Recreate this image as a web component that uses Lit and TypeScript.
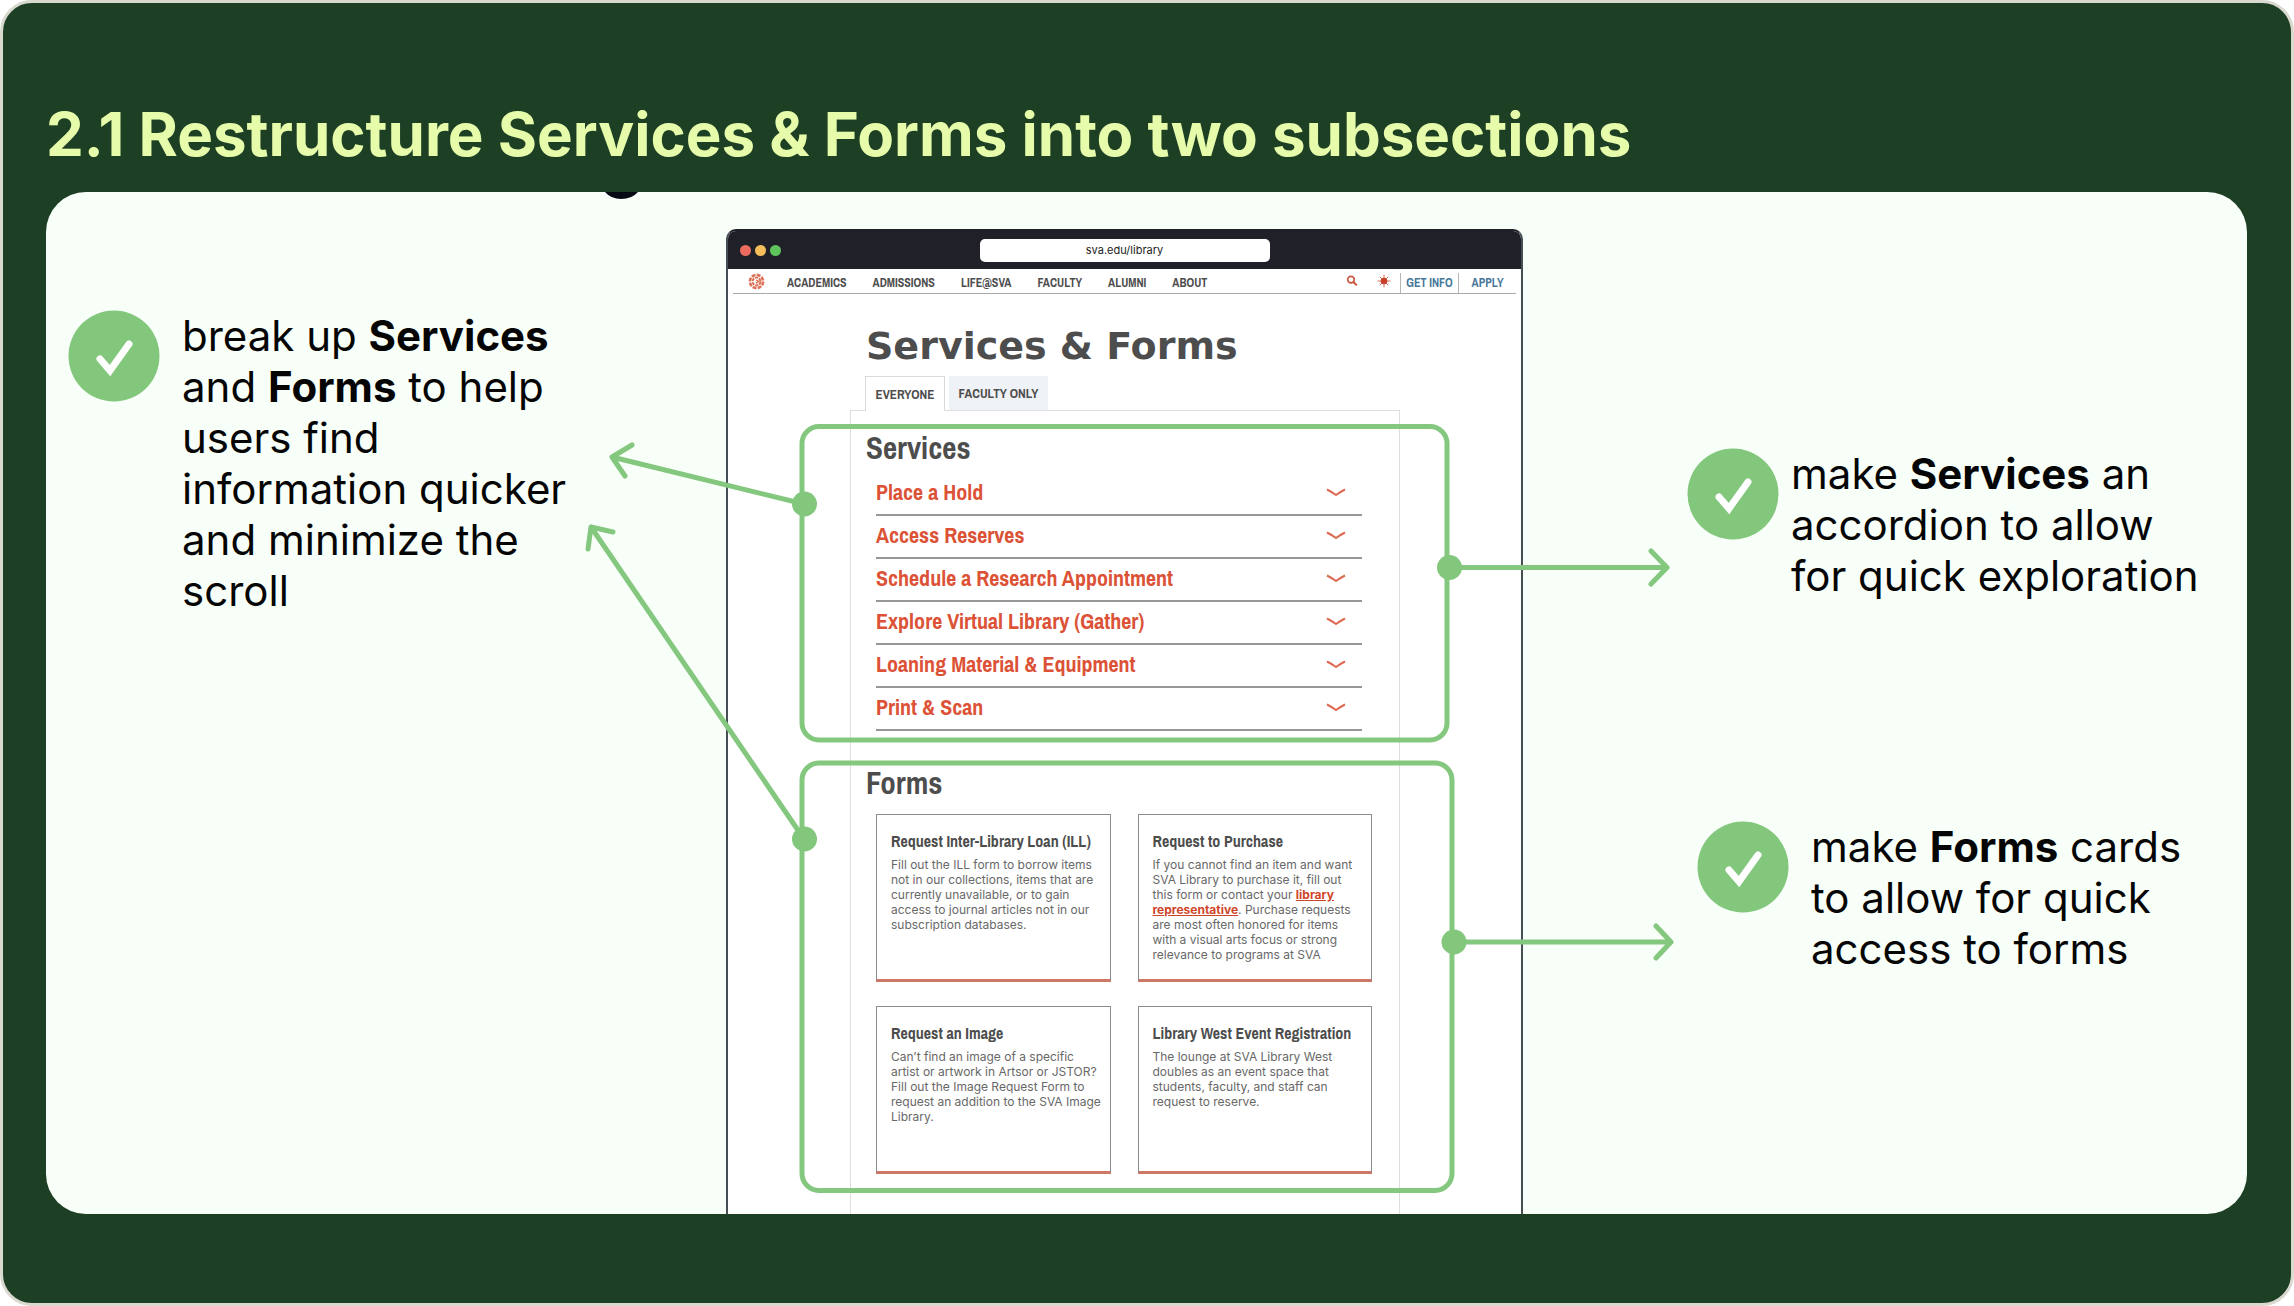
import { LitElement, html, css, svg } from "lit";
import { customElement } from "lit/decorators.js";

const services = [
  "Place a Hold",
  "Access Reserves",
  "Schedule a Research Appointment",
  "Explore Virtual Library (Gather)",
  "Loaning Material & Equipment",
  "Print & Scan",
];

const sections = ["ACADEMICS", "ADMISSIONS", "LIFE@SVA", "FACULTY", "ALUMNI", "ABOUT"];

const forms = [
  {
    title: "Request Inter-Library Loan (ILL)",
    body: html`Fill out the ILL form to borrow items<br />not in our collections, items that are<br />currently unavailable, or to gain<br />access to journal articles not in our<br />subscription databases.`,
  },
  {
    title: "Request to Purchase",
    body: html`If you cannot find an item and want<br />SVA Library to purchase it, fill out<br />this form or contact your <a class="rep" href="#rep">library<br />representative</a>. Purchase requests<br />are most often honored for items<br />with a visual arts focus or strong<br />relevance to programs at SVA`,
  },
  {
    title: "Request an Image",
    body: html`Can’t find an image of a specific<br />artist or artwork in Artsor or JSTOR?<br />Fill out the Image Request Form to<br />request an addition to the SVA Image<br />Library.`,
  },
  {
    title: "Library West Event Registration",
    body: html`The lounge at SVA Library West<br />doubles as an event space that<br />students, faculty, and staff can<br />request to reserve.`,
  },
];

/* Browser window holding the library page */
@customElement("library-window")
export class LibraryWindow extends LitElement {
  static styles = css`
    :host {
      display: flex;
      flex-direction: column;
      box-sizing: border-box;
      background: #fff;
      border: 2px solid #454f54;
      border-top-color: #1f2028;
      border-bottom: 0;
      border-radius: 10px 10px 0 0;
      color: #4d4d4d;
      font-family: "Archivo Narrow", "Liberation Sans Narrow", "Roboto Condensed", "Liberation Sans", sans-serif;
    }
    button {
      font: inherit;
      color: inherit;
      background: none;
      border: 0;
      padding: 0;
      cursor: pointer;
    }
    a {
      color: inherit;
      text-decoration: none;
    }
    .chrome {
      display: grid;
      grid-template-columns: 1fr 290px 1fr;
      align-items: center;
      height: 38px;
      background: #1f2028;
      border-radius: 8px 8px 0 0;
    }
    .lights {
      display: flex;
      gap: 4px;
      padding-left: 12px;
    }
    .light {
      width: 11px;
      height: 11px;
      border-radius: 50%;
    }
    .red { background: #ec6a5e; }
    .amber { background: #f4bf5a; }
    .green { background: #5fc45b; }
    .url {
      box-sizing: border-box;
      width: 100%;
      height: 23px;
      border: 0;
      border-radius: 5px;
      background: #fff;
      padding: 0;
      text-align: center;
      color: #222;
      font: 11px Inter, sans-serif;
    }
    .nav {
      display: flex;
      align-items: center;
      height: 24px;
      margin: 0 5px;
      padding-left: 15px;
      border-bottom: 1px solid #a9a9a9;
      font-size: 12px;
      font-weight: 700;
    }
    .logo {
      display: block;
      width: 17px;
      height: 17px;
      margin-right: 22px;
    }
    .links {
      display: flex;
      gap: 26px;
      flex: 1;
      padding-top: 4px;
    }
    .tools {
      display: flex;
      align-items: center;
      align-self: stretch;
    }
    .tool {
      display: block;
      width: 32px;
      height: 14px;
    }
    .tool svg {
      display: block;
      margin: auto;
    }
    .cta {
      display: flex;
      align-items: center;
      justify-content: center;
      align-self: stretch;
      width: 57px;
      margin-top: 4px;
      border-left: 1px solid #b5b5b5;
      color: #47789a;
    }
    .page {
      flex: 1;
      display: flex;
      flex-direction: column;
      padding: 30px 121px 0 122px;
    }
    h1 {
      margin: 0 0 8px 16px;
      font: 700 38px/44px "DejaVu Sans", sans-serif;
      white-space: nowrap;
    }
    .tabs {
      display: flex;
      gap: 4px;
      padding-left: 15px;
    }
    .tab {
      box-sizing: border-box;
      height: 34px;
      font-size: 13px;
      font-weight: 700;
    }
    .everyone {
      width: 80px;
      height: 35px;
      margin-bottom: -1px;
      background: #fff;
      border: 1px solid #dadada;
      border-bottom: 0;
      z-index: 1;
    }
    .faculty {
      width: 99px;
      background: #eff2f6;
    }
    .panel {
      flex: 1;
      border: 1px solid #dedede;
      border-bottom: 0;
      padding: 15px 27px 0 25px;
    }
    h2 {
      margin: 0 0 3px -10px;
      font-size: 31px;
      line-height: 44px;
      font-weight: 700;
    }
    .services {
      list-style: none;
      margin: 0 10px 0 0;
      padding: 0;
    }
    .row {
      box-sizing: border-box;
      display: flex;
      align-items: center;
      justify-content: space-between;
      width: 100%;
      height: 43px;
      padding: 0 16px 3px 0;
      border-bottom: 2px solid #979797;
      color: #dc5236;
      font-size: 22px;
      font-weight: 700;
    }
    .formsTitle {
      margin-top: 30px;
      margin-bottom: 9px;
    }
    .cards {
      display: grid;
      grid-template-columns: 1fr 1fr;
      gap: 24px 27px;
    }
    .card {
      box-sizing: border-box;
      height: 168px;
      padding: 16px 0 0 14px;
      border: 1px solid #8c8c8c;
      border-bottom: 3px solid #cc7864;
      white-space: nowrap;
    }
    h3 {
      margin: 0 0 6px;
      font-size: 16px;
      line-height: 20px;
      font-weight: 700;
    }
    p {
      margin: 0;
      color: #686868;
      font: 12px/15px Inter, sans-serif;
    }
    .rep {
      color: #cf4528;
      font-weight: 700;
      text-decoration: underline;
    }
  `;

  render() {
    return html`
      <div class="chrome">
        <div class="lights">
          <span class="light red"></span><span class="light amber"></span><span class="light green"></span>
        </div>
        <input class="url" aria-label="Address" value="sva.edu/library" />
      </div>
      <nav class="nav">
        <a class="logo" href="#home" aria-label="Home">
          <svg width="17" height="17" viewBox="0 0 17 17" fill="none" stroke="#de7058">
            <circle cx="8.5" cy="8.5" r="6.6" stroke-dasharray="3.9 1.28" stroke-width="2.6" />
            <circle cx="8.5" cy="8.5" r="3.9" stroke-dasharray="3.2 .9" stroke-width="2" />
            <path d="M8 7l2.6 1.4L8 10.400" stroke-width="1.4" />
          </svg>
        </a>
        <div class="links">${sections.map((s) => html`<a href="#${s.toLowerCase()}">${s}</a>`)}</div>
        <div class="tools">
          <button class="tool" aria-label="Search">
            <svg width="12" height="12" viewBox="0 0 12 12" fill="none" stroke="#c9553f" stroke-width="1.7">
              <circle cx="5" cy="4.6" r="3.3" />
              <path d="M7.4 7l3.400 3.4" stroke-width="2" />
            </svg>
          </button>
          <button class="tool" aria-label="Theme">
            <svg width="14" height="14" viewBox="0 0 14 14" stroke="#dc7460" stroke-width="1">
              <path d="M7 .5v13M.5 7h13M2.8 2.8l8.400 8.400M11.200 2.8l-8.400 8.400" />
              <circle cx="7" cy="7" r="3.3" fill="#c8402a" stroke="none" />
            </svg>
          </button>
          <a class="cta" href="#info">GET INFO</a>
          <a class="cta" href="#apply">APPLY</a>
        </div>
      </nav>
      <div class="page">
        <h1>Services &amp; Forms</h1>
        <div class="tabs">
          <button class="tab everyone">EVERYONE</button>
          <button class="tab faculty">FACULTY ONLY</button>
        </div>
        <div class="panel">
          <h2>Services</h2>
          <ul class="services">
            ${services.map(
              (s) => html`<li>
                <button class="row" aria-expanded="false">
                  <span>${s}</span>
                  <svg width="20" height="10" viewBox="0 0 20 10" fill="none" stroke="#dc6a50" stroke-width="2" aria-hidden="true">
                    <path d="M1 2.500q4 2 9 5.500q5-3.500 9-5.500" />
                  </svg>
                </button>
              </li>`
            )}
          </ul>
          <h2 class="formsTitle">Forms</h2>
          <div class="cards">
            ${forms.map((f) => html`<article class="card"><h3>${f.title}</h3><p>${f.body}</p></article>`)}
          </div>
        </div>
      </div>
    `;
  }
}

@customElement("app-root")
export class AppRoot extends LitElement {
  static styles = css`
    :host {
      display: block;
      font-family: Inter, sans-serif;
    }
    .slide {
      box-sizing: border-box;
      display: flex;
      flex-direction: column;
      min-height: 100vh;
      padding: 93px 44px 89px 43px;
      background: #1d3f24;
      border: 3px solid #d9d9d0;
      border-radius: 32px;
    }
    h1 {
      margin: 0 0 20px;
      color: #e6fcab;
      font-size: 60px;
      line-height: 76px;
      font-weight: 700;
      white-space: nowrap;
    }
    .board {
      position: relative;
      flex: 1;
      display: grid;
      grid-template-columns: 680fr 797fr 724fr;
      overflow: hidden;
      background: #f8fff8;
      border-radius: 40px;
    }
    library-window {
      margin-top: 37px;
    }
    .notes {
      padding: 118px 0 0 22px;
    }
    .right {
      padding: 256px 0 0 164px;
    }
    .note {
      display: flex;
      align-items: flex-start;
      gap: 22px;
      color: #050505;
    }
    .near {
      gap: 12px;
    }
    .later {
      margin: 220px 0 0 10px;
    }
    .check {
      flex: none;
      width: 92px;
      height: 92px;
    }
    .note p {
      margin: 0;
      font-size: 42px;
      line-height: 51px;
      white-space: nowrap;
    }
    b {
      font-weight: 700;
    }
    .marks {
      position: absolute;
      inset: 0;
      width: 100%;
      height: 100%;
      pointer-events: none;
    }
  `;

  private check() {
    return svg`<svg class="check" viewBox="0 0 92 92" aria-hidden="true">
      <circle cx="46" cy="46" r="45.500" fill="#82c77c" />
      <path d="M32 49L42 60.500L61 34" fill="none" stroke="#fff" stroke-width="7" stroke-linecap="round" stroke-linejoin="miter" />
    </svg>`;
  }

  render() {
    return html`
      <main class="slide">
        <h1>2.1 Restructure Services &amp; Forms into two subsections</h1>
        <section class="board">
          <div class="notes">
            <div class="note">
              ${this.check()}
              <p>break up <b>Services</b><br />and <b>Forms</b> to help<br />users find<br />information quicker<br />and minimize the<br />scroll</p>
            </div>
          </div>
          <library-window></library-window>
          <div class="notes right">
            <div class="note near">
              ${this.check()}
              <p>make <b>Services</b> an<br />accordion to allow<br />for quick exploration</p>
            </div>
            <div class="note later">
              ${this.check()}
              <p>make <b>Forms</b> cards<br />to allow for quick<br />access to forms</p>
            </div>
          </div>
          <svg class="marks" viewBox="0 0 2201 1022" preserveAspectRatio="none" fill="none" stroke="#84c77e" stroke-width="5" stroke-linecap="round" stroke-linejoin="round" aria-hidden="true">
            <path d="M559 0H592Q586 7 575 7Q565 7 559 0Z" fill="#050a14" stroke="none" />
            <rect x="756" y="234.500" width="645" height="313.500" rx="17" />
            <rect x="756" y="571" width="650" height="427.500" rx="17" />
            <path d="M758 312L566 265M586 253L566 265L579 284" />
            <path d="M758 647L545 335M567 340L545 335L542 357" />
            <path d="M1403 375.500H1621M1605 359L1621 375.500L1605 392" />
            <path d="M1408 750H1625M1610 734L1625 750L1610 766" />
            <g fill="#82c77c" stroke="none">
              <circle cx="758.500" cy="312" r="12.500" />
              <circle cx="758.500" cy="647" r="12.500" />
              <circle cx="1403.500" cy="375.500" r="12.500" />
              <circle cx="1408" cy="750" r="12.500" />
            </g>
          </svg>
        </section>
      </main>
    `;
  }
}
